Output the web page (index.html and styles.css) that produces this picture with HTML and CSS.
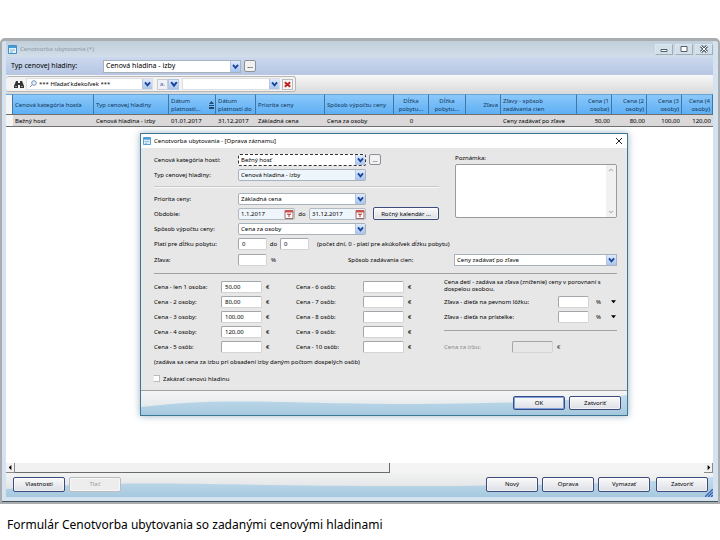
FILE: index.html
```html
<!DOCTYPE html>
<html lang="sk">
<head>
<meta charset="utf-8">
<title>Cenotvorba ubytovania</title>
<link rel="stylesheet" href="styles.css">
</head>
<body>
<svg class="defs" aria-hidden="true">
  <linearGradient id="water" x2="0" y2="1"><stop offset="0" stop-color="#c3dcec"/><stop offset="1" stop-color="#a6c8de"/></linearGradient>
  <symbol id="chevron" viewBox="0 0 10 10"><path d="M2.2 3.2 5 6.6 7.8 3.2" fill="none" stroke="#16459c" stroke-width="2"/></symbol>
  <symbol id="form" viewBox="0 0 9 9"><path d="M.5.5h8v8h-8z" fill="#e4f3fc" stroke="#3f8fc8"/><path d="M1 1h7v2H1z" fill="#4a9bd4"/><path d="M2 5h5M2 7h3" stroke="#7db4da"/></symbol>
  <symbol id="calendar" viewBox="0 0 10 10"><path d="M1 1.5h8v8H1z" fill="#fff" stroke="#9b6a68"/><path d="M1 1h8v2.5H1z" fill="#c9524c"/><path d="M3 5.2h4M5 5.2v3" fill="none" stroke="#b0302c"/></symbol>
  <symbol id="wave" viewBox="0 0 480 24" preserveAspectRatio="none"><path d="M0 16C40 11 70 10 110 10.500S210 13 270 13S400 11 440 8S470 5 480 4V24H0z" fill="url(#water)"/></symbol>
</svg>

<main class="window">
  <header class="titlebar">
    <svg class="icon"><use href="#form"/></svg>
    <h1>Cenotvorba ubytovania (*)</h1>
    <div class="window-buttons">
      <button aria-label="Minimalizovať"><svg viewBox="0 0 16 10"><path d="M5 5.500h6v2H5z" fill="#fff" stroke="#54606c"/></svg></button>
      <button aria-label="Maximalizovať"><svg viewBox="0 0 16 10"><path d="M5 2.500h6v5H5z" fill="#fff" stroke="#54606c"/></svg></button>
      <button aria-label="Zavrieť"><svg viewBox="0 0 16 10"><path d="m5 2 6 6m0-6L5 8" stroke="#54606c" stroke-width="3"/><path d="m5 2 6 6m0-6L5 8" stroke="#fff"/></svg></button>
    </div>
  </header>

  <div class="filter">
    <label for="level">Typ cenovej hladiny:</label>
    <span class="combo level"><select id="level"><option>Cenová hladina - izby</option></select><svg><use href="#chevron"/></svg></span>
    <button class="dots">...</button>
  </div>

  <div class="search-row">
    <div class="search">
      <svg class="binoculars" viewBox="0 0 10 9"><path d="M2 1h2v2h2V1h2l2 5v2H6V5H4v3H0V6z" fill="#333"/><path d="M1 6.500h2m4 0h2" stroke="#999"/></svg>
      <span class="combo where"><svg class="lens" viewBox="0 0 8 8"><circle cx="5" cy="3" r="2.3" fill="#e8f2ff" stroke="#7a93b8"/><path d="M3.3 4.7.8 7.2" stroke="#7a93b8"/></svg><select aria-label="Stĺpec"><option>*** Hľadať kdekoľvek ***</option></select><svg><use href="#chevron"/></svg></span>
      <button class="mode" aria-label="Spôsob hľadania">a.</button>
      <button class="drop" aria-label="Možnosti"><svg><use href="#chevron"/></svg></button>
      <span class="combo what"><select aria-label="Hľadaný text"><option></option></select><svg><use href="#chevron"/></svg></span>
      <button class="clear" aria-label="Zrušiť"><svg viewBox="0 0 10 10"><path d="m2 2.500 6 5m0-5-6 5" stroke="#c2201c" stroke-width="2.200"/></svg></button>
    </div>
  </div>

  <div class="sheet">
    <table>
      <colgroup><col class="c-mark"><col class="c-cat"><col class="c-type"><col class="c-from"><col class="c-to"><col class="c-calc"><col class="c-calc"><col class="c-price"><col class="c-len"><col class="c-price"><col class="c-disc"><col class="c-price"><col class="c-price"><col class="c-price"><col></colgroup>
      <thead>
        <tr><th></th><th>Cenová kategória hosťa</th><th>Typ cenovej hladiny</th><th class="sorted">Dátum<br>platnosti...<svg viewBox="0 0 5 8"><path d="M2.500 0 5 3H0zM0 4h5v1H0zM0 6h5v2H0z" fill="#25486e"/></svg></th><th>Dátum<br>platnosti do</th><th>Priorita ceny</th><th>Spôsob výpočtu ceny</th><th class="mid">Dĺžka<br>pobytu...</th><th class="mid">Dĺžka<br>pobytu...</th><th class="num">Zľava</th><th>Zľavy - spôsob<br>zadávania cien</th><th class="num">Cena (1<br>osoba)</th><th class="num">Cena (2<br>osoby)</th><th class="num">Cena (3<br>osoby)</th><th class="num">Cena (4<br>osoby)</th></tr>
      </thead>
      <tbody>
        <tr><td></td><td>Bežný hosť</td><td>Cenová hladina - izby</td><td>01.01.2017</td><td>31.12.2017</td><td>Základná cena</td><td>Cena za osoby</td><td class="mid">0</td><td></td><td></td><td>Ceny zadávať po zľave</td><td class="num">50,00</td><td class="num">80,00</td><td class="num">100,00</td><td class="num">120,00</td></tr>
      </tbody>
    </table>
  </div>

  <div class="scroll"><button aria-label="Doľava"><svg viewBox="0 0 8 8"><path d="M5 1v6L2 4z"/></svg></button><span class="thumb"></span><button class="right" aria-label="Doprava"><svg viewBox="0 0 8 8"><path d="M3 1v6l3-3z"/></svg></button></div>

  <footer class="actions">
    <svg class="wave"><use href="#wave"/></svg>
    <button class="btn">Vlastnosti</button>
    <button class="btn" disabled>Tlač</button>
    <button class="btn push">Nový</button>
    <button class="btn">Oprava</button>
    <button class="btn">Vymazať</button>
    <button class="btn last">Zatvoriť</button>
    <svg class="grip" viewBox="0 0 8 8"><path d="m0 8 8-8M3 8l5-5M6 8l2-2" stroke="#3b62b4" stroke-width="1.400"/></svg>
  </footer>

  <section class="dialog" role="dialog" aria-labelledby="dlg">
    <header class="dialog-title"><svg class="icon"><use href="#form"/></svg><h2 id="dlg">Cenotvorba ubytovania - [Oprava záznamu]</h2><button aria-label="Zavrieť"><svg viewBox="0 0 8 8"><path d="m1 1 6 6m0-6L1 7" stroke="#222"/></svg></button></header>
    <form class="dialog-body">
      <div class="top">
        <div class="left">
          <div class="pair">
            <div class="row"><label for="cat">Cenová kategória hostí:</label><span class="combo wide focus"><select id="cat"><option>Bežný hosť</option></select><svg><use href="#chevron"/></svg></span><button type="button" class="dots">...</button></div>
            <div class="row"><label for="typ">Typ cenovej hladiny:</label><span class="combo wide tint"><select id="typ"><option>Cenová hladina - izby</option></select><svg><use href="#chevron"/></svg></span></div>
          </div>
          <div class="row"><label for="pri">Priorita ceny:</label><span class="combo wide"><select id="pri"><option>Základná cena</option></select><svg><use href="#chevron"/></svg></span></div>
          <div class="row"><label for="from">Obdobie:</label><span class="date"><input id="from" value="1.1.2017"><svg><use href="#calendar"/></svg></span><label class="to" for="till">do</label><span class="date"><input id="till" value="31.12.2017"><svg><use href="#calendar"/></svg></span><button type="button" class="btn cal">Ročný kalendár ...</button></div>
          <div class="row"><label for="calc">Spôsob výpočtu ceny:</label><span class="combo wide"><select id="calc"><option>Cena za osoby</option></select><svg><use href="#chevron"/></svg></span></div>
        </div>
        <div class="note"><label for="note">Poznámka:</label><div class="memo"><textarea id="note"></textarea><svg viewBox="0 0 8 50" aria-hidden="true"><path d="m2 6 2-2 2 2M2 44l2 2 2-2" fill="none" stroke="#b5b5b5"/></svg></div></div>
      </div>
      <div class="row tall"><label for="l1">Platí pre dĺžku pobytu:</label><input id="l1" class="short" value="0"><label class="to near" for="l2">do</label><input id="l2" class="short" value="0"><span class="hint">(počet dní, 0 - platí pre akúkoľvek dĺžku pobytu)</span></div>
      <div class="row tall"><label for="disc">Zľava:</label><input id="disc" class="short"><span class="unit">%</span><label class="way" for="way">Spôsob zadávania cien:</label><span class="combo fill"><select id="way"><option>Ceny zadávať po zľave</option></select><svg><use href="#chevron"/></svg></span></div>

      <div class="prices">
        <div class="col one">
          <div class="row"><label for="p1">Cena - len 1 osoba:</label><input id="p1" value="50,00"><span class="unit">€</span></div>
          <div class="row"><label for="p2">Cena - 2 osoby:</label><input id="p2" value="80,00"><span class="unit">€</span></div>
          <div class="row"><label for="p3">Cena - 3 osoby:</label><input id="p3" value="100,00"><span class="unit">€</span></div>
          <div class="row"><label for="p4">Cena - 4 osoby:</label><input id="p4" value="120,00"><span class="unit">€</span></div>
          <div class="row"><label for="p5">Cena - 5 osôb:</label><input id="p5"><span class="unit">€</span></div>
        </div>
        <div class="col two">
          <div class="row"><label for="p6">Cena - 6 osôb:</label><input id="p6"><span class="unit">€</span></div>
          <div class="row"><label for="p7">Cena - 7 osôb:</label><input id="p7"><span class="unit">€</span></div>
          <div class="row"><label for="p8">Cena - 8 osôb:</label><input id="p8"><span class="unit">€</span></div>
          <div class="row"><label for="p9">Cena - 9 osôb:</label><input id="p9"><span class="unit">€</span></div>
          <div class="row"><label for="p10">Cena - 10 osôb:</label><input id="p10"><span class="unit">€</span></div>
        </div>
        <div class="col kids">
          <p>Cena detí - zadáva sa zľava (zníženie) ceny v porovnaní s<br>dospelou osobou.</p>
          <div class="row"><label for="k1">Zľava - dieťa na pevnom lôžku:</label><input id="k1"><span class="unit">%</span><svg viewBox="0 0 6 4"><path d="M0 0h6L3 3.500z"/></svg></div>
          <div class="row"><label for="k2">Zľava - dieťa na prístelke:</label><input id="k2"><span class="unit">%</span><svg viewBox="0 0 6 4"><path d="M0 0h6L3 3.500z"/></svg></div>
          <div class="row room"><label for="room">Cena za izbu:</label><input id="room" disabled><span class="unit">€</span></div>
        </div>
      </div>
      <p class="info">(zadáva sa cena za izbu pri obsadení izby daným počtom dospelých osôb)</p>
      <label class="check"><input type="checkbox">Zakázať cenovú hladinu</label>
    </form>
    <footer class="dialog-actions"><svg class="wave"><use href="#wave"/></svg><button class="btn default">OK</button><button class="btn">Zatvoriť</button></footer>
  </section>
</main>
<p class="caption">Formulár Cenotvorba ubytovania so zadanými cenovými hladinami</p>
</body>
</html>
```
FILE: styles.css
```css
* { box-sizing: border-box; }
body {
  margin: 0;
  min-height: 100vh;
  padding-top: 38px;
  display: flex;
  flex-direction: column;
  background: #fff;
  color: #000;
  font: 6px/8px "Noto Sans", "Open Sans", sans-serif;
}
h1, h2, p { margin: 0; font-size: inherit; font-weight: 400; }
button, input, select, textarea { font: inherit; color: inherit; margin: 0; border-radius: 0; }
button { padding: 0; display: flex; align-items: center; justify-content: center; }
svg { display: block; flex: none; }
.defs { position: absolute; width: 0; height: 0; }
.icon { width: 9px; height: 9px; }

.window {
  position: relative;
  flex: 1;
  display: flex;
  flex-direction: column;
  padding: 0 5px 5px 4px;
  border: solid #a9adb0;
  border-width: 3px 2px 2px;
  border-radius: 5px 5px 0 0;
  background: #d5e2ef;
  box-shadow: inset 0 -1px #47525d;
}
.titlebar {
  height: 16px;
  display: flex;
  align-items: center;
  gap: 3px;
  padding-left: 2px;
  color: #8c98a5;
  background: linear-gradient(#c0cfdb, #d2dee8);
}
.titlebar h1, .dialog-title h2 { font-family: "Noto Sans", sans-serif; }
.window-buttons { display: flex; gap: 2px; margin-left: auto; }
.window-buttons button { width: 18px; height: 11px; border: 1px solid #a0adb9; border-top-color: #dce6ee; border-left-color: #dce6ee; background: #d3dfe9; }
.window-buttons svg { width: 16px; height: 10px; }

.filter {
  height: 18px;
  display: flex;
  align-items: center;
  padding-left: 5px;
  background: linear-gradient(#cbd8ee, #b6c6e3);
  font-size: 7px;
}
.filter label { width: 92px; }
.filter .level { width: 138px; height: 13px; }
.filter .dots { height: 12px; }

.combo { position: relative; display: flex; height: 12px; background: #fff; border: 1px solid #a9b1bb; }
.combo select { flex: 1; min-width: 0; width: 100%; appearance: none; border: 0; padding: 0 10px 0 2px; background: none; outline: none; }
.combo > svg:last-child {
  position: absolute;
  right: 0;
  top: 0;
  width: 10px;
  height: 100%;
  background: linear-gradient(#dfeafb, #a9c4ee);
  border-left: 1px solid #b3c6e4;
  pointer-events: none;
}
.dots { width: 12px; height: 11px; margin-left: 3px; background: #f1f1f1; border: 1px solid #8d9197; border-radius: 2px; }

.search-row { height: 19px; padding: 1px 0 2px; background: linear-gradient(#f8f8f8, #d9d9d9); }
.search {
  width: 290px;
  height: 16px;
  display: flex;
  align-items: center;
  padding-left: 8px;
  background: #f3f3f3;
  border: 1px solid #b7b7b7;
  border-left: 0;
  border-radius: 3px;
}
.binoculars { width: 10px; height: 9px; margin-right: 2px; }
.where { width: 127px; border-color: #ddd; }
.lens { width: 8px; height: 8px; margin: 1px 0 0 2px; }
.mode { width: 11px; height: 11px; margin-left: 4px; border: 1px solid #ccc; background: #eef2f8; color: #3d5a94; }
.drop { width: 11px; height: 11px; border: 1px solid #b3c6e4; background: linear-gradient(#dfeafb, #a9c4ee); }
.drop svg { width: 10px; height: 10px; }
.what { width: 98px; margin-left: 3px; border-color: #ddd; }
.clear { width: 11px; height: 11px; margin-left: 2px; border: 1px solid #bbb; background: #f5f5f5; }
.clear svg { width: 9px; height: 9px; }

.sheet { flex: 1; background: #fff; overflow: hidden; }
table { width: 100%; table-layout: fixed; border-collapse: separate; border-spacing: 0; }
.c-mark { width: 7px; }
.c-cat { width: 81px; }
.c-type { width: 75px; }
.c-from { width: 47px; }
.c-to { width: 40px; }
.c-calc { width: 69px; }
.c-price { width: 35px; }
.c-len { width: 37px; }
.c-disc { width: 76px; }
th, td { padding: 0 2px; text-align: left; font-weight: 400; white-space: nowrap; overflow: hidden; }
th { height: 20px; color: #12365a; background: linear-gradient(#8bc8fa, #5eaff4); border-right: 1px solid #3f77a9; border-top: 1px solid #6aa5d8; }
td { height: 13px; background: #dad8d8; border: solid #6f6f6f; border-width: 1px 0; }
th:first-child, td:first-child { background: #f4f4f4; padding: 0; }
.sorted { position: relative; }
.sorted svg { position: absolute; right: 1px; top: 6px; width: 5px; height: 8px; }
.mid { text-align: center; }
.num { text-align: right; }

.scroll { display: flex; height: 10px; background: #f4f4f4; }
.scroll button { width: 9px; border: solid #8a8a8a; border-width: 0 1px 1px 0; background: #f2f2f2; }
.scroll svg { width: 7px; height: 7px; }
.thumb { width: 53%; border: solid #6b6b6b; border-width: 0 1px 1px 0; background: #f1f1f1; }
.scroll .right { margin-left: auto; }

.actions { position: relative; height: 24px; display: flex; align-items: center; gap: 4px; padding: 0 5px 2px 7px; background: linear-gradient(#f2f2f2, #d9dde0); }
.wave { position: absolute; inset: 0; width: 100%; height: 100%; }
.btn { position: relative; width: 52px; height: 15px; border: 1px solid #3d4a7c; border-radius: 2px; background: linear-gradient(#fafafa, #dddfe6); box-shadow: inset 0 0 0 1px #fff8; white-space: nowrap; }
.btn:disabled { color: #9b9b9b; border-color: #b9bcc0; background: #ededed; }
.push { margin-left: auto; }
.last { margin-left: 2px; }
.grip { position: absolute; right: 0; bottom: 0; width: 8px; height: 8px; }

.dialog {
  position: absolute;
  top: 92px;
  left: 138px;
  width: 488px;
  background: #e7e7e7;
  border: 1px solid #3c7896;
  box-shadow: 0 0 7px #6f8fa5aa;
}
.dialog-title { height: 14px; display: flex; align-items: center; gap: 3px; padding: 0 4px 0 2px; background: #fff; }
.dialog-title button { width: 8px; height: 8px; margin-left: auto; border: 0; background: none; }
.dialog-title svg { width: 8px; height: 8px; }
.dialog-body { padding: 4px 10px 4px 13px; }
.top { display: flex; }
.left { width: 301px; }
.pair { border-bottom: 1px solid #c9c9c9; box-shadow: 0 1px #f8f8f8; padding-bottom: 4px; margin-bottom: 4px; width: 285px; }
.row { display: flex; align-items: center; height: 15px; white-space: nowrap; }
.row > label { flex: none; }
.row > label:first-child { width: 84px; }
.tall { height: 16px; }
.wide { width: 128px; border-radius: 2px; }
.tint, .date { background: #eff6fb; }
.focus { border: 1px dashed #333; }
input:not([type="checkbox"]) { height: 12px; padding: 0 3px; border: 1px solid #a3a6aa; border-right-color: #d4d4d4; border-bottom-color: #d4d4d4; border-radius: 2px; background: #fff; outline: none; }
.date { display: flex; align-items: center; width: 57px; height: 12px; border: 1px solid #b3b9c0; border-radius: 2px; }
.date input:not([type="checkbox"]) { flex: 1; min-width: 0; height: 10px; border: 0; background: none; padding: 0 0 0 2px; }
.date svg { width: 10px; height: 10px; }
.to { width: 14px; text-align: center; }
.near { width: 13px; }
.cal { width: 66px; height: 13px; margin-left: 7px; flex: none; }
.short { width: 29px; }
.hint { margin-left: 8px; }
.unit { margin-left: 4px; }
.way { margin-left: 72px; width: 106px; }
.fill { flex: 1; }
.note { flex: 1; padding-top: 2px; }
.memo { display: flex; height: 54px; margin-top: 2px; border: 1px solid #9a9a9a; border-radius: 2px; background: #fff; }
.memo textarea { flex: 1; min-width: 0; border: 0; padding: 2px; resize: none; outline: none; background: none; }
.memo svg { width: 10px; height: 52px; background: #f1f1f1; }

.prices { display: flex; margin-top: 5px; padding-top: 5px; border-top: 1px solid #a2a2a2; }
.one { width: 142px; }
.one .row > label:first-child { width: 67px; }
.one input, .two input { width: 41px; }
.two { width: 148px; }
.two .row > label:first-child { width: 67px; }
.kids { flex: 1; }
.kids p { height: 15px; white-space: nowrap; line-height: 7px; }
.kids .row > label:first-child { width: 114px; }
.kids input { width: 31px; }
.kids .unit { margin-left: 7px; }
.kids svg { width: 5px; height: 4px; margin: 0 1px 0 auto; }
.kids .room { height: 26px; margin-top: 6px; border-top: 1px solid #a2a2a2; color: #888; padding-top: 7px; }
.kids .room > label:first-child { width: 68px; }
.kids .room input { width: 41px; background: #e7e7e7; }
.kids .room .unit { margin-left: 4px; color: #444; }
.info { padding: 2px 0 5px; }
.check { display: flex; align-items: center; gap: 3px; height: 15px; }
.check input { appearance: none; width: 7px; height: 7px; background: #fff; border: 1px solid #bbb; border-left-color: #eee; margin-left: -1px; }
.dialog-actions { position: relative; height: 25px; display: flex; align-items: center; justify-content: flex-end; gap: 4px; padding: 0 6px 0 0; border-top: 1px solid #a2a2a2; background: linear-gradient(#f4f4f4, #dce4e9); }
.dialog-actions .btn { height: 14px; }
.default { box-shadow: inset 0 0 0 1px #7da0e0; }

.caption { padding: 12px 7px 0; height: 36px; font: 12px/18px "Noto Sans", sans-serif; color: #000; }
```
